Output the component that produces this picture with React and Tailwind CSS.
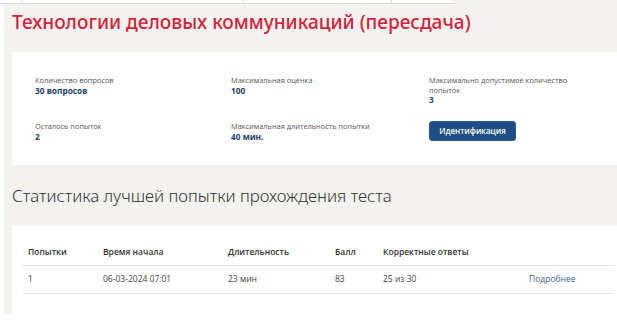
export default function App() {
  const top = [
    { label: "Количество вопросов", value: "30 вопросов" },
    { label: "Максимальная оценка", value: "100" },
    { label: "Максимально допустимое количество попыток", value: "3" },
  ];

  const cols = [
    { title: "Попытки", w: "w-[75px]" },
    { title: "Время начала", w: "w-[125px]" },
    { title: "Длительность", w: "w-[107px]" },
    { title: "Балл", w: "w-[48px]" },
    { title: "Корректные ответы", w: "w-[146px]" },
    { title: "", w: "" },
  ];
  const rows = [["1", "06-03-2024 07:01", "23 мин", "83", "25 из 30"]];

  const Field = ({ label, value }) => (
    <div>
      <p className="text-[#555] max-w-[150px] leading-[9.5px]">{label}</p>
      <p className="text-[#1e3f6d] font-bold text-[8.3px] leading-[10px]">{value}</p>
    </div>
  );

  return (
    <div className="w-[617px] h-[332px] bg-white overflow-hidden flex flex-col font-['Open_Sans',sans-serif]">
      {/* top strip left over from the table above */}
      <div className="flex h-[4px] shrink-0">
        <div className="flex w-[456px] bg-white border-b border-[#dcdcdc]">
          <div className="w-[22px] border-r border-[#dcdcdc]" />
          <div className="w-[222px] border-r border-[#dcdcdc]" />
          <div className="w-[148px] border-r border-[#dcdcdc]" />
          <div className="w-[63px] border-r border-[#dcdcdc]" />
        </div>
        <div className="flex-1 bg-[#f3f2ef]" />
      </div>

      <div className="flex h-[309px] shrink-0">
        <div className="w-[4px] bg-white" />
        <div className="flex-1 bg-[#f3f2ef] pl-[8px] flex flex-col">
          <h1 className="mt-[6px] text-[19px] leading-[24px] font-medium text-[#d61f3b] font-['Noto_Sans',sans-serif]">
            Технологии деловых коммуникаций (пересдача)
          </h1>

          <div className="mt-[18px] bg-white h-[113px] pl-[23px] pt-[24px] text-[7.4px]">
            <div className="grid grid-cols-[196px_198px_1fr]">
              {top.map((c) => (
                <Field key={c.label} {...c} />
              ))}
            </div>
            <div className="grid grid-cols-[196px_198px_1fr] mt-[17px]">
              <Field label="Осталось попыток" value="2" />
              <Field label="Максимальная длительность попытки" value="40 мин." />
              <div className="-mt-[1px]">
                <button className="w-[87px] h-[20px] rounded-[3px] bg-[#1d4e87] border border-[#2a5d96] text-white text-[8px] font-semibold">
                  Идентификация
                </button>
              </div>
            </div>
          </div>

          <h2 className="mt-[20px] text-[16.8px] leading-[22px] font-light text-[#333] font-['Noto_Sans',sans-serif]">
            Статистика лучшей попытки прохождения теста
          </h2>

          <div className="mt-[18px] bg-white flex-1 pl-[10px] pr-[3px] pt-[15px]">
            <table className="w-full text-[8.5px] text-[#333] border-collapse">
              <thead>
                <tr className="border-b border-[#e4e4e4]">
                  {cols.map((c) => (
                    <th key={c.title} className={`${c.w} h-[25px] pl-[6px] text-left font-semibold`}>
                      {c.title}
                    </th>
                  ))}
                </tr>
              </thead>
              <tbody>
                {rows.map((r) => (
                  <tr key={r[0]} className="border-b border-[#e4e4e4]">
                    {r.map((v, i) => (
                      <td key={i} className="h-[28px] pl-[6px] text-[#444]">
                        {v}
                      </td>
                    ))}
                    <td className="h-[28px] pl-[6px] text-[#3d628c]">Подробнее</td>
                  </tr>
                ))}
              </tbody>
            </table>
          </div>
        </div>
      </div>
    </div>
  );
}
